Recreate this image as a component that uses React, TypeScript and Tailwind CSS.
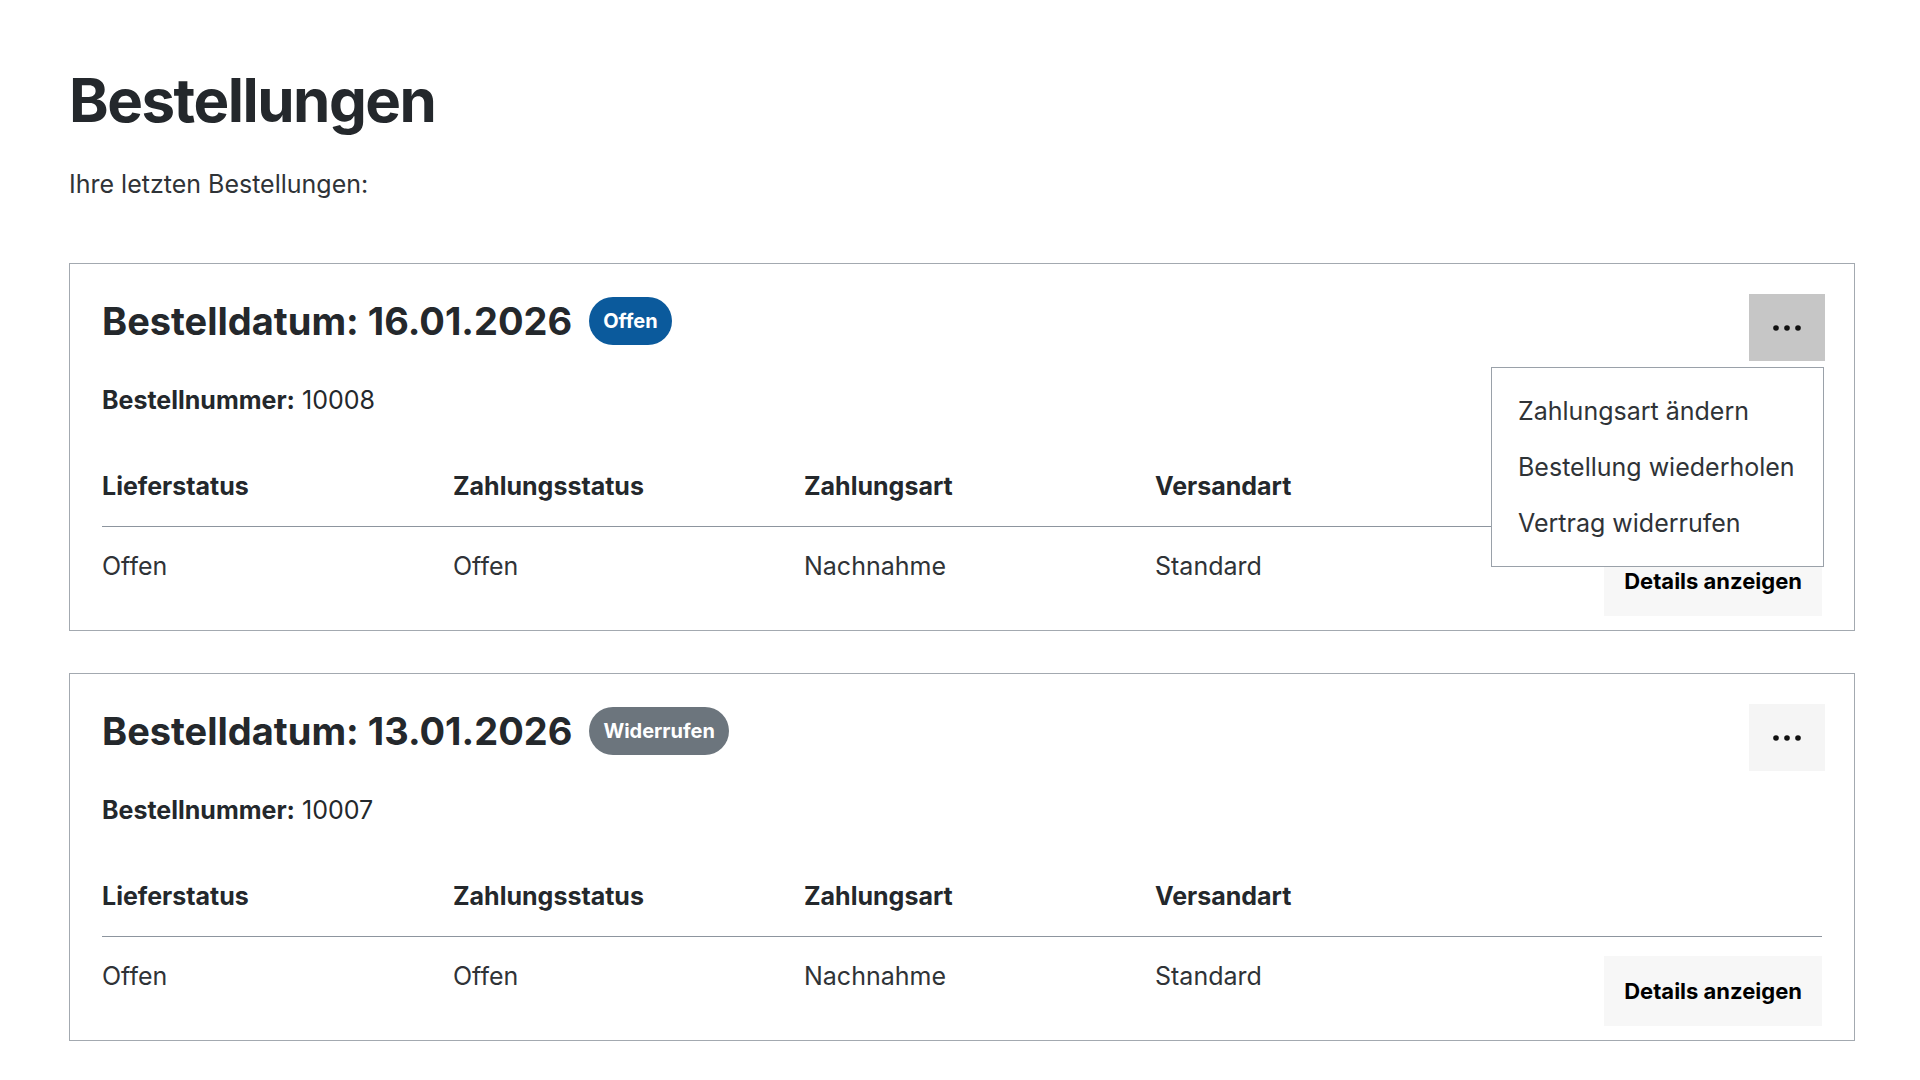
import React from "react";

type Order = {
  date: string;
  status: string;
  statusClass: string;
  number: string;
  menuOpen: boolean;
  menuButtonClass: string;
};

const orders: Order[] = [
  {
    date: "16.01.2026",
    status: "Offen",
    statusClass: "bg-[#0b5a9c]",
    number: "10008",
    menuOpen: true,
    menuButtonClass: "bg-[#c6c6c6]",
  },
  {
    date: "13.01.2026",
    status: "Widerrufen",
    statusClass: "bg-[#6c757d]",
    number: "10007",
    menuOpen: false,
    menuButtonClass: "bg-[#f5f5f5]",
  },
];

const columns = ["Lieferstatus", "Zahlungsstatus", "Zahlungsart", "Versandart"];
const values = ["Offen", "Offen", "Nachnahme", "Standard"];
const menuItems = ["Zahlungsart ändern", "Bestellung wiederholen", "Vertrag widerrufen"];

function Dots() {
  return (
    <svg width="30" height="8" viewBox="0 0 30 8" aria-hidden="true">
      <circle cx="4" cy="4" r="2.8" fill="#111" />
      <circle cx="15" cy="4" r="2.8" fill="#111" />
      <circle cx="26" cy="4" r="2.8" fill="#111" />
    </svg>
  );
}

function OrderCard({ order }: { order: Order }) {
  return (
    <section className="border border-[#a3a9b0] px-8 pt-[30px]">
      <div className="flex items-start justify-between">
        <div className="flex h-[54px] items-center gap-[17px]">
          <h3 className="text-[38px] leading-[54px] font-bold text-[#24282c]">
            Bestelldatum: {order.date}
          </h3>
          <span
            className={`flex h-[48px] items-center rounded-full px-[14px] text-[20px] font-bold text-white ${order.statusClass}`}
          >
            {order.status}
          </span>
        </div>
        <div className="relative -mr-[3px]">
          <button
            type="button"
            className={`flex h-[67px] w-[76px] items-center justify-center ${order.menuButtonClass}`}
          >
            <Dots />
          </button>
          {order.menuOpen && (
            <ul className="absolute right-[1px] top-full z-10 mt-[6px] w-[333px] border border-[#9aa1a9] bg-white py-[15px]">
              {menuItems.map((item) => (
                <li
                  key={item}
                  className="px-[26px] py-[10px] text-[25px] leading-[36px] text-[#2f3337]"
                >
                  {item}
                </li>
              ))}
            </ul>
          )}
        </div>
      </div>

      <p className="mt-[21px] text-[25px] leading-[36px] text-[#24282c]">
        <span className="font-bold">Bestellnummer:</span> {order.number}
      </p>

      <table className="mt-[30px] w-full text-[25px] leading-[36px] text-[#24282c]">
        <thead>
          <tr className="border-b border-[#8d959e]">
            {columns.map((c) => (
              <th key={c} className="w-[351px] pt-5 pb-[22px] text-left font-bold">
                {c}
              </th>
            ))}
            <th className="pt-5 pb-[22px]" />
          </tr>
        </thead>
        <tbody>
          <tr>
            {values.map((v, i) => (
              <td key={i} className="pt-[21px] align-top text-[#2f3337]">
                {v}
              </td>
            ))}
            <td className="pt-[19px] pb-[14px] text-right align-top">
              <button
                type="button"
                className="h-[70px] bg-[#f7f7f7] px-[20px] text-[22px] font-bold text-black"
              >
                Details anzeigen
              </button>
            </td>
          </tr>
        </tbody>
      </table>
    </section>
  );
}

export default function App() {
  return (
    <main className="min-h-screen bg-white pt-16 pl-[69px] pr-[65px] font-['Inter',sans-serif] text-[#24282c]">
      <h1 className="text-[60px] leading-[72px] font-bold tracking-[-1.5px]">Bestellungen</h1>
      <p className="mt-[30px] text-[25px] leading-[36px] text-[#2f3337]">Ihre letzten Bestellungen:</p>
      <div className="mt-[61px] flex flex-col gap-[42px]">
        {orders.map((o) => (
          <OrderCard key={o.number} order={o} />
        ))}
      </div>
    </main>
  );
}
